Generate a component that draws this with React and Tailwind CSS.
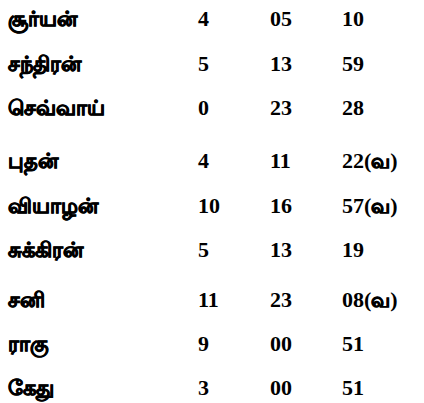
export default function App() {
  const rows = [
    ["சூர்யன்", "4", "05", "10", "h-[45px]"],
    ["சந்திரன்", "5", "13", "59", "h-[44px]"],
    ["செவ்வாய்", "0", "23", "28", "h-[53px]"],
    ["புதன்", "4", "11", "22(வ)", "h-[45px]"],
    ["வியாழன்", "10", "16", "57(வ)", "h-[44px]"],
    ["சுக்கிரன்", "5", "13", "19", "h-[50px]"],
    ["சனி", "11", "23", "08(வ)", "h-[44px]"],
    ["ராகு", "9", "00", "51", "h-[44px]"],
    ["கேது", "3", "00", "51", "h-[44px]"],
  ];
  const tamilCls = "font-bold text-[21px] [-webkit-text-stroke:0.8px_black]";
  const renderVal = (v) => {
    const m = v.match(/^(\d+)\((.+)\)$/);
    if (!m) return v;
    return (
      <>
        {m[1]}(<span className="font-bold text-[20px] [-webkit-text-stroke:0.8px_black]">{m[2]}</span>)
      </>
    );
  };
  return (
    <div
      className="w-[424px] h-[403px] bg-white text-black overflow-hidden pt-[7px]"
      style={{ fontFamily: '"Liberation Serif", serif' }}
    >
      {rows.map(([name, a, b, c, h]) => (
        <div key={name} className={`flex items-baseline font-bold text-[22px] leading-[24px] ${h}`}>
          <div className={`w-[198px] pl-[8px] ${tamilCls}`}>{name}</div>
          <div className="w-[72px]">{a}</div>
          <div className="w-[72px]">{b}</div>
          <div>{renderVal(c)}</div>
        </div>
      ))}
    </div>
  );
}
